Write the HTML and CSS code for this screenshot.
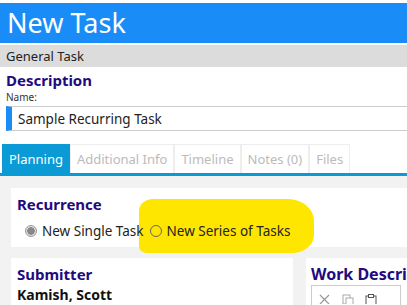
FILE: index.html
```html
<!DOCTYPE html>
<html lang="en">
<head>
    <meta charset="UTF-8">
    <title>New Task</title>
    <link rel="stylesheet" href="styles.css">
</head>
<body>
    <div class="page-title">New Task</div>
    <div class="section-bar">General Task</div>
    <div class="description">
        <h2>Description</h2>
        <label for="task-name">Name:</label>
        <input type="text" id="task-name" value="Sample Recurring Task">
    </div>
    <div class="tabs">
        <div class="tab active">Planning</div>
        <div class="tab">Additional Info</div>
        <div class="tab">Timeline</div>
        <div class="tab">Notes (0)</div>
        <div class="tab">Files</div>
    </div>
    <div class="tab-body">
        <div class="card recurrence">
            <h3>Recurrence</h3>
            <div class="radios">
                <span class="radio checked"></span><span class="radio-label">New Single Task</span>
                <span class="radio"></span><span class="radio-label">New Series of Tasks</span>
            </div>
            <div class="highlight"></div>
        </div>
        <div class="row">
            <div class="card submitter">
                <h3>Submitter</h3>
                <div class="person">Kamish, Scott</div>
            </div>
            <div class="card work">
                <h3>Work Description</h3>
                <div class="toolbar">
                    <svg width="14" height="10" viewBox="0 0 14 10"><path d="M2 1 L11 10 M11 1 L2 10" stroke="#999" stroke-width="1.2" fill="none"/></svg>
                    <svg width="14" height="10" viewBox="0 0 14 10"><rect x="2" y="1" width="7" height="9" fill="none" stroke="#aaa"/><rect x="5" y="4" width="7" height="8" fill="#fff" stroke="#aaa"/></svg>
                    <svg width="14" height="10" viewBox="0 0 14 10"><rect x="2" y="2" width="10" height="10" fill="none" stroke="#555"/><rect x="4.5" y="0.5" width="5" height="3" fill="#fff" stroke="#555"/></svg>
                </div>
            </div>
        </div>
    </div>
</body>
</html>
```

FILE: styles.css
```css
body {
    font-family: "Noto Sans", "Open Sans", sans-serif;
    background-color: white;
    margin: 0;
    overflow: hidden;
}
.page-title {
    margin-top: 3px;
    height: 40px;
    background-color: #1a8cf8;
    color: white;
    font-size: 27px;
    line-height: 40px;
    padding-left: 7px;
}
.section-bar {
    margin-top: 2px;
    height: 22px;
    background-color: #dcdcdc;
    color: #222;
    font-size: 13px;
    line-height: 22px;
    padding-left: 6px;
}
.description {
    padding: 3px 0 0 6px;
}
.description h2 {
    margin: 0;
    font-size: 15px;
    line-height: 20px;
    color: #1f0a80;
}
.description label {
    display: block;
    font-size: 10px;
    line-height: 13px;
    color: #333;
    margin-top: 1px;
}
.description input {
    display: block;
    box-sizing: border-box;
    width: 100%;
    height: 25px;
    margin-top: 2px;
    border: none;
    border-top: 1px solid #ccc;
    border-bottom: 1px solid #ccc;
    border-left: 6px solid #1a8cf8;
    padding-left: 6px;
    font-family: inherit;
    font-size: 13.5px;
    color: #222;
}
.tabs {
    display: flex;
    margin-top: 13px;
    padding-left: 2px;
    border-bottom: 3px solid #0a9ad6;
}
.tab {
    height: 29px;
    line-height: 29px;
    padding: 0 6px;
    font-size: 13px;
    color: #bbb;
    border: 1px solid #eee;
    border-bottom: none;
    box-sizing: border-box;
}
.tab.active {
    background-color: #0a9ad6;
    color: white;
    border-color: #0a9ad6;
}
.tab-body {
    background-color: #f2f2f2;
    padding: 12px 0 0 11px;
    height: 200px;
}
.card {
    background-color: white;
    padding: 6px;
}
.card h3 {
    margin: 0;
    font-size: 15px;
    line-height: 20px;
    color: #1f0a80;
}
.recurrence {
    position: relative;
    height: 47px;
}
.radios {
    display: flex;
    align-items: center;
    margin-top: 8px;
    padding-left: 8px;
    font-size: 13.5px;
    color: #222;
    position: relative;
    z-index: 1;
}
.radio {
    width: 12px;
    height: 12px;
    border: 1px solid #666;
    border-radius: 50%;
    box-sizing: border-box;
    margin-right: 5px;
}
.radio.checked {
    background: radial-gradient(circle, #888 0 3.5px, #ddd 4px);
    border-color: #999;
}
.radio-label {
    margin-right: 6px;
}
.highlight {
    position: absolute;
    left: 128px;
    top: 11px;
    width: 175px;
    height: 54px;
    background-color: #ffe600;
    border-radius: 14px 26px 22px 8px / 12px 22px 18px 6px;
}
.row {
    display: flex;
    gap: 13px;
    margin-top: 11px;
}
.submitter {
    width: 270px;
}
.person {
    font-size: 14px;
    font-weight: bold;
    color: #111;
    margin-top: 1px;
}
.work {
    flex: 1;
    padding-left: 5px;
    white-space: nowrap;
    overflow: hidden;
}
.work h3 {
    font-size: 16px;
}
.toolbar {
    margin-top: 1px;
    border: 1px solid #ccc;
    height: 20px;
    padding: 8px 0 0 6px;
    display: flex;
    gap: 9px;
}
```
